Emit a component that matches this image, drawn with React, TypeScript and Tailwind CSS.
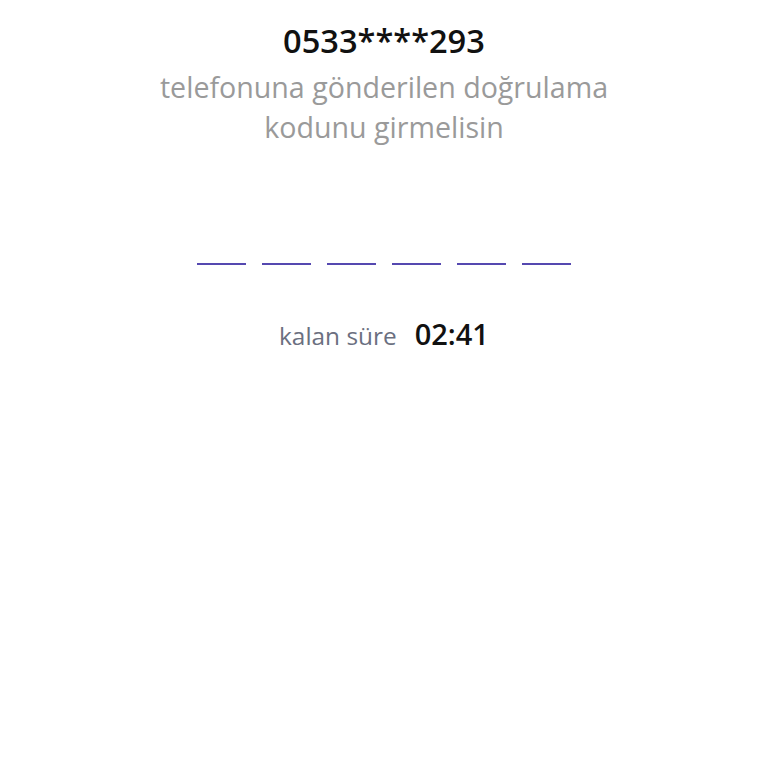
export default function App() {
  return (
    <div className="w-[768px] h-[768px] bg-white flex flex-col items-center" style={{ fontFamily: '"Open Sans", sans-serif' }}>
      <div className="mt-[19px] text-[32.6px] leading-[44px] font-semibold text-[#111111]">0533****293</div>
      <div className="mt-[4px] text-[28.6px] leading-[40px] text-[#9a9a9a] text-center w-[490px]">
        telefonuna gönderilen doğrulama kodunu girmelisin
      </div>
      <div className="mt-[116px] flex gap-[16px]">
        {[0, 1, 2, 3, 4, 5].map((i) => (
          <div key={i} className="w-[49px] h-[2px] bg-[#5548b0]" />
        ))}
      </div>
      <div className="mt-[47px] flex items-baseline gap-[18px]">
        <span className="text-[24.4px] text-[#6b6f80]">kalan süre</span>
        <span className="text-[29px] font-semibold text-[#111111]">02:41</span>
      </div>
    </div>
  );
}
